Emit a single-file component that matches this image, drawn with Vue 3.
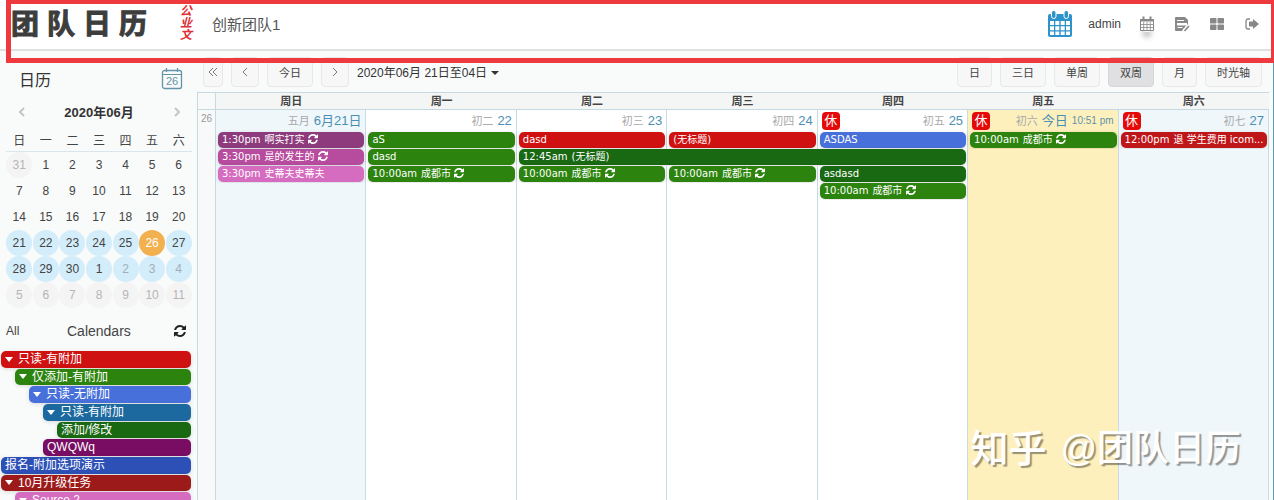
<script setup>
const weekdays = ['日', '一', '二', '三', '四', '五', '六']

const miniWeeks = [
  [31, 1, 2, 3, 4, 5, 6],
  [7, 8, 9, 10, 11, 12, 13],
  [14, 15, 16, 17, 18, 19, 20],
  [21, 22, 23, 24, 25, 26, 27],
  [28, 29, 30, 1, 2, 3, 4],
  [5, 6, 7, 8, 9, 10, 11],
]

function dayClass(row, col) {
  const other = (row === 0 && col === 0) || row === 5
  return {
    other,
    range: row === 3 || row === 4,
    faded: row === 4 && col > 3,
    today: row === 3 && col === 5,
  }
}

const sources = [
  { name: '只读-有附加', depth: 0, tone: 'red', open: true },
  { name: '仅添加-有附加', depth: 1, tone: 'green', open: true },
  { name: '只读-无附加', depth: 2, tone: 'blue', open: true },
  { name: '只读-有附加', depth: 3, tone: 'steel', open: true },
  { name: '添加/修改', depth: 4, tone: 'forest' },
  { name: 'QWQWq', depth: 3, tone: 'plum' },
  { name: '报名-附加选项演示', depth: 0, tone: 'royal' },
  { name: '10月升级任务', depth: 0, tone: 'brick', open: true },
  { name: 'Source 2', depth: 1, tone: 'pink', open: true },
]

const views = ['日', '三日', '单周', '双周', '月', '时光轴']

const days = [
  { lunar: '五月', label: '6月21日', kind: 'weekend' },
  { lunar: '初二', label: '22' },
  { lunar: '初三', label: '23' },
  { lunar: '初四', label: '24' },
  { lunar: '初五', label: '25', rest: true },
  { lunar: '初六', label: '今日', time: '10:51 pm', rest: true, kind: 'now' },
  { lunar: '初七', label: '27', rest: true, kind: 'weekend' },
]

const chengdu = { time: '10:00am', title: '成都市', tone: 'green', repeat: true }

const eventRows = [
  [
    { kind: 'weekend', event: { time: '1:30pm', title: '啊实打实', tone: 'purple', repeat: true } },
    { event: { title: 'aS', tone: 'green' } },
    { event: { title: 'dasd', tone: 'red' } },
    { event: { title: '(无标题)', tone: 'red' } },
    { event: { title: 'ASDAS', tone: 'blue' } },
    { kind: 'now', event: chengdu },
    { kind: 'weekend', event: { time: '12:00pm', title: '退 学生费用 icom...', tone: 'crimson' } },
  ],
  [
    { kind: 'weekend', event: { time: '3:30pm', title: '是的发生的', tone: 'orchid', repeat: true } },
    { event: { title: 'dasd', tone: 'green' } },
    { span: 3, event: { time: '12:45am', title: '(无标题)', tone: 'forest' } },
    { kind: 'now' },
    { kind: 'weekend' },
  ],
  [
    { kind: 'weekend', event: { time: '3:30pm', title: '史蒂夫史蒂夫', tone: 'pink' } },
    { event: chengdu },
    { event: chengdu },
    { event: chengdu },
    { event: { title: 'asdasd', tone: 'forest' } },
    { kind: 'now' },
    { kind: 'weekend' },
  ],
  [{ kind: 'weekend' }, {}, {}, {}, { event: chengdu }, { kind: 'now' }, { kind: 'weekend' }],
]

const refreshPath =
  'M1511 928q0 5-1 7-64 268-268 434.500T764 1536q-146 0-282.500-55T238 1324l-129 129q-19 19-45 19t-45-19-19-45V960q0-26 19-45t45-19h448q26 0 45 19t19 45-19 45l-137 137q71 66 161 102t187 36q134 0 250-65t186-179q11-17 53-117 8-23 30-23h192q13 0 22.500 9.500t9.500 22.500zm25-800v448q0 26-19 45t-45 19h-448q-26 0-45-19t-19-45 19-45l138-138Q969 256 768 256q-134 0-250 65T332 500q-11 17-53 117-8 23-30 23H50q-13 0-22.500-9.500T18 608v-7q65-268 270-434.500T768 0q146 0 284 55.500T1297 212l130-129q19-19 45-19t45 19 19 45z'
</script>

<template>
  <div class="app">
    <header class="topbar">
      <h1 class="brand"><span v-for="c in '团队日历'" :key="c">{{ c }}</span></h1>
      <div class="seal"><span v-for="c in '公业文'" :key="c">{{ c }}</span></div>
      <div class="team">创新团队1</div>
      <nav class="tools">
        <svg class="avatar" viewBox="0 0 26 28">
          <rect x="1" y="4" width="24" height="23" rx="2" fill="#2f93cb" />
          <path d="M3 11h4v4H3zm5.300 0h4v4h-4zm5.400 0h4v4h-4zm5.300 0h4v4h-4zM3 16.200h4v4H3zm5.300 0h4v4h-4zm5.400 0h4v4h-4zm5.300 0h4v4h-4zM3 21.400h4v3.600H3zm5.300 0h4v3.600h-4zm5.400 0h4v3.600h-4zm5.300 0h4v3.600h-4z" fill="#fff" />
          <rect x="4.500" y=".500" width="4.500" height="8" rx="2.200" fill="#2f93cb" stroke="#fff" />
          <rect x="17" y=".500" width="4.500" height="8" rx="2.200" fill="#2f93cb" stroke="#fff" />
        </svg>
        <span class="user">admin</span>
        <button class="tool active" aria-label="日历">
          <svg viewBox="0 0 16 16" fill="none" stroke="#888">
            <path d="M1.500 3.500h13v11h-13z" /><path d="M1 4.500h14" stroke-width="2" />
            <path d="M4.700 6v8.500M8 6v8.500M11.300 6v8.500M1.500 8.500h13M1.500 11.500h13" stroke-width=".8" />
            <path d="M4.500 .5v4M11.500 .5v4" stroke-width="2" />
          </svg>
        </button>
        <button class="tool" aria-label="编辑">
          <svg viewBox="0 0 16 16">
            <path d="M2 1h9l3 3v6l-4 5H2a1 1 0 0 1-1-1V2a1 1 0 0 1 1-1z" fill="#888" />
            <path d="M3 4.500h7M3.500 11.500h5" stroke="#fff" />
            <path d="M3 7h10v2.500H3z" fill="#fff" />
            <path d="M9.500 15.500l5.500-6" stroke="#fff" stroke-width="4" />
            <path d="M10.500 15l4.500-5" stroke="#888" stroke-width="1.600" />
          </svg>
        </button>
        <button class="tool" aria-label="视图">
          <svg viewBox="0 0 16 16" fill="#888">
            <rect x="1" y="2" width="6.500" height="5.500" rx=".8" /><rect x="8.500" y="2" width="6.500" height="5.500" rx=".8" />
            <rect x="1" y="8.500" width="6.500" height="5.500" rx=".8" /><rect x="8.500" y="8.500" width="6.500" height="5.500" rx=".8" />
          </svg>
        </button>
        <button class="tool" aria-label="退出">
          <svg viewBox="0 0 16 16">
            <path d="M6 3H4a2 2 0 0 0-2 2v6a2 2 0 0 0 2 2h2" fill="none" stroke="#888" stroke-width="1.300" />
            <path d="M5 5.500h4V3l6 5-6 5v-2.500H5z" fill="#888" />
          </svg>
        </button>
      </nav>
    </header>

    <div class="body">
      <aside class="sidebar">
        <div class="side-title">
          <h2>日历</h2>
          <svg viewBox="0 0 22 22" fill="none" stroke="#6394a8">
            <rect x="1.500" y="2.500" width="19" height="18" rx="2" stroke-width="1.300" />
            <path d="M1.500 6.500h19M5.500 0v4M16.500 0v4" stroke-width="1.200" />
            <text x="11" y="17" text-anchor="middle" stroke="none" fill="#6394a8" font-size="11">26</text>
          </svg>
        </div>
        <div class="month-nav">
          <button aria-label="上个月"><svg viewBox="0 0 10 12"><path d="M8 2L4 6l4 4" /></svg></button>
          <strong>2020年06月</strong>
          <button aria-label="下个月"><svg viewBox="0 0 10 12"><path d="M3 2l4 4-4 4" /></svg></button>
        </div>
        <table class="mini">
          <thead>
            <tr><th v-for="d in weekdays" :key="d">{{ d }}</th></tr>
          </thead>
          <tbody>
            <tr v-for="(week, r) in miniWeeks" :key="r">
              <td v-for="(d, c) in week" :key="c"><span :class="dayClass(r, c)">{{ d }}</span></td>
            </tr>
          </tbody>
        </table>
        <div class="cal-head">
          <span class="all">All</span>
          <h3>Calendars</h3>
          <button aria-label="刷新"><svg viewBox="0 0 1536 1536"><path :d="refreshPath" fill="#222" /></svg></button>
        </div>
        <ul class="sources">
          <li
            v-for="(s, i) in sources"
            :key="i"
            :class="s.tone"
            :style="{ marginLeft: s.depth * 14 + 'px' }"
          >
            <i v-if="s.open" class="caret"></i>{{ s.name }}
          </li>
        </ul>
      </aside>

      <main class="main">
        <div class="toolbar">
          <button class="btn slim" aria-label="前一段"><svg viewBox="0 0 10 10"><path d="M5 1L1 5l4 4M9 1L5 5l4 4" /></svg></button>
          <button class="btn arrow" aria-label="上一页"><svg viewBox="0 0 10 10"><path d="M7 1L3 5l4 4" /></svg></button>
          <button class="btn">今日</button>
          <button class="btn arrow" aria-label="下一页"><svg viewBox="0 0 10 10"><path d="M3 1l4 4-4 4" /></svg></button>
          <button class="range-title">2020年06月 21日至04日<i class="caret"></i></button>
          <div class="views">
            <button v-for="v in views" :key="v" class="btn" :class="{ on: v === '双周' }">{{ v }}</button>
          </div>
        </div>
        <div class="board">
          <table class="grid">
            <thead>
              <tr>
                <th class="wk"></th>
                <th v-for="d in weekdays" :key="d">周{{ d }}</th>
              </tr>
            </thead>
            <tbody>
              <tr class="day-row">
                <td class="wk">26</td>
                <td v-for="(d, i) in days" :key="i" :class="d.kind">
                  <div class="day-head">
                    <span v-if="d.rest" class="rest">休</span>
                    <span class="lunar">{{ d.lunar }}</span>
                    <span class="num">{{ d.label }}</span>
                    <span v-if="d.time" class="clock">{{ d.time }}</span>
                  </div>
                </td>
              </tr>
              <tr v-for="(row, r) in eventRows" :key="r" class="event-row">
                <td class="wk"></td>
                <td v-for="(cell, i) in row" :key="i" :class="cell.kind" :colspan="cell.span || 1">
                  <div v-if="cell.event" class="event" :class="cell.event.tone">
                    <span v-if="cell.event.time" class="time">{{ cell.event.time }}</span>{{ cell.event.title }}
                    <svg v-if="cell.event.repeat" viewBox="0 0 1536 1536"><path :d="refreshPath" fill="#fff" /></svg>
                  </div>
                </td>
              </tr>
              <tr>
                <td class="wk"></td>
                <td v-for="(d, i) in days" :key="i" :class="d.kind"></td>
              </tr>
            </tbody>
          </table>
        </div>
      </main>
    </div>

    <div class="highlight"></div>
    <div class="watermark"><span class="site">知乎</span><span>@团队日历</span></div>
  </div>
</template>

<style>
body {
  margin: 0;
  background: #f9fafa;
}
</style>

<style scoped>
* {
  box-sizing: border-box;
}
.app {
  position: relative;
  display: flex;
  flex-direction: column;
  height: 100vh;
  overflow: hidden;
  font-family: "Liberation Sans", "Noto Sans CJK SC", sans-serif;
  font-size: 12px;
  color: #444;
}
button {
  padding: 0;
  border: 0;
  background: none;
  font: inherit;
  color: inherit;
}
h1,
h2,
h3 {
  margin: 0;
  font-weight: 400;
}
svg {
  display: block;
}
.topbar {
  display: flex;
  align-items: center;
  flex: none;
  height: 51px;
  padding: 0 14px 1px 11px;
  border-bottom: 2px solid #e0e0e0;
  background: #fff;
}
.brand {
  display: flex;
  gap: 8px;
  padding-top: 2px;
  font-size: 28px;
  line-height: 40px;
  font-weight: 700;
  color: #3d3d3d;
  -webkit-text-stroke: 1px #3d3d3d;
}
.seal {
  display: flex;
  flex-direction: column;
  margin-left: 33px;
  padding-bottom: 2px;
  font-size: 12px;
  line-height: 12px;
  font-weight: 700;
  font-style: italic;
  color: #e03038;
}
.team {
  margin-left: 20px;
  padding-bottom: 2px;
  font-size: 15px;
  color: #555;
}
.tools {
  display: flex;
  align-items: center;
  margin-left: auto;
}
.avatar {
  width: 26px;
  height: 28px;
}
.user {
  margin: 0 18px 0 15px;
}
.tool {
  width: 16px;
  margin-left: 19px;
}
.tool.active {
  margin-left: 0;
  border-radius: 8px;
  box-shadow: 0 9px 5px -3px #ccc;
  background: #fff;
}
.tool svg {
  width: 16px;
  height: 16px;
}
.body {
  display: flex;
  flex: 1;
  min-height: 0;
}
.sidebar {
  flex: none;
  width: 197px;
  padding-top: 6px;
}
.side-title {
  display: flex;
  align-items: center;
  justify-content: space-between;
  height: 43px;
  padding: 0 14px 0 19px;
}
.side-title h2 {
  font-size: 16px;
  color: #333;
}
.side-title svg {
  width: 22px;
  height: 22px;
}
.month-nav {
  display: flex;
  align-items: center;
  justify-content: space-between;
  height: 23px;
  padding: 0 15px 0 16px;
  font-size: 13px;
  color: #333;
}
.month-nav svg {
  width: 10px;
  height: 12px;
  fill: none;
  stroke: #c4c4c4;
  stroke-width: 2;
}
.mini {
  width: 186px;
  margin-left: 6px;
  table-layout: fixed;
  border-collapse: separate;
  border-spacing: 0;
  text-align: center;
}
.mini th {
  height: 29px;
  padding: 4px 0 0;
  border-bottom: 1px solid #d9e6ee;
  font-weight: 400;
}
.mini td {
  height: 26px;
  padding: 0;
}
.mini td span {
  display: block;
  width: 26px;
  margin: 0 auto;
  border-radius: 13px;
  line-height: 26px;
}
.mini .other {
  background: #f4f4f4;
  color: #b5b5b5;
}
.mini .range {
  background: #d3edfb;
}
.mini .faded {
  color: #9fb0b8;
}
.mini .today {
  background: #f2b04e;
  color: #fff;
}
.cal-head {
  display: flex;
  align-items: center;
  justify-content: space-between;
  height: 43px;
  padding: 2px 11px 0 6px;
}
.cal-head h3 {
  font-size: 14px;
  margin-left: 36px;
  margin-right: auto;
}
.cal-head .all {
  width: 25px;
}
.cal-head svg {
  width: 12px;
  height: 12px;
}
.sources {
  display: grid;
  grid-auto-rows: 1fr;
  gap: 1px;
  height: 158px;
  margin: 0 6px 0 1px;
  padding: 0;
  list-style: none;
  line-height: 17px;
}
.sources li {
  display: flex;
  align-items: center;
  min-height: 0;
  padding-left: 4px;
  border-radius: 5px;
  color: #fff;
  box-shadow: 0 1px 4px #0002;
}
.caret {
  display: inline-block;
  border: 4px solid transparent;
  border-top-color: currentColor;
  border-bottom: 0;
}
.sources .caret {
  margin-right: 5px;
  border-top-width: 5px;
}
.red { background: #cf1111; }
.green { background: #2c840e; }
.blue { background: #4870da; }
.steel { background: #1b699f; }
.forest { background: #196812; }
.plum { background: #780d63; }
.royal { background: #2c50b6; }
.brick { background: #9d1a1a; }
.pink { background: #d66cc0; }
.purple { background: #8e3b7e; }
.orchid { background: #b74b9d; }
.crimson { background: #bf161a; }
.main {
  display: flex;
  flex: 1;
  flex-direction: column;
  min-width: 0;
  border-right: 1px solid #5b9fb5;
}
.toolbar {
  display: flex;
  align-items: center;
  flex: none;
  height: 41px;
  padding: 0 11px 0 6px;
  gap: 8px;
}
.btn {
  height: 30px;
  padding: 0 11px;
  border: 1px solid #e8e8e8;
  border-radius: 4px;
  background: #f7f7f7;
  font-size: 11px;
}
.btn.slim {
  padding: 0 4px;
}
.btn.arrow {
  padding: 0 8px;
}
.btn svg {
  width: 10px;
  height: 10px;
  fill: none;
  stroke: #777;
}
.btn.on {
  border-color: #d6d6d8;
  background: #e0e0e2;
}
.range-title {
  color: #333;
}
.range-title .caret {
  margin-left: 4px;
  vertical-align: 2px;
}
.views {
  display: flex;
  gap: 8px;
  margin-left: auto;
}
.board {
  flex: 1;
  min-height: 0;
  padding-right: 4px;
}
.grid {
  width: 100%;
  height: 100%;
  table-layout: fixed;
  border-collapse: separate;
  border-spacing: 0;
  border-left: 1px solid #c6d9e3;
}
.grid th {
  height: 18px;
  padding: 0;
  border: 1px solid #c6d9e3;
  border-width: 1px 0;
  background: #f4f5f5;
  font-size: 11px;
  line-height: 16px;
}
.grid td {
  padding: 0 1px 0 2px;
  border-right: 1px solid #c8dce6;
  background: #fff;
}
.grid .wk {
  width: 18px;
  padding: 0;
  border-right: 1px solid #c6d9e3;
  background: #f8f9f9;
  font-size: 10px;
  line-height: 18px;
  text-align: center;
  vertical-align: top;
  color: #999;
}
.grid .weekend {
  background: #eff7fb;
}
.grid .now {
  background: #fdf0bd;
}
.day-row td {
  height: 22px;
}
.day-head {
  display: flex;
  align-items: center;
  justify-content: flex-end;
  gap: 4px;
  height: 22px;
  padding: 0 3px 0 2px;
  line-height: 18px;
}
.rest {
  width: 18px;
  height: 18px;
  margin-right: auto;
  border-radius: 4px;
  background: #e50a0a;
  font-size: 13px;
  text-align: center;
  color: #fff;
}
.lunar {
  font-size: 11px;
  color: #aaa;
}
.num {
  font-size: 13px;
  color: #4b90b4;
}
.clock {
  font-size: 10px;
  color: #5f93a8;
}
.event-row td {
  height: 17px;
  vertical-align: top;
}
.event {
  height: 16px;
  padding: 0 0 0 4px;
  overflow: hidden;
  border-radius: 5px;
  box-shadow: 0 1px 4px #0002;
  font-family: "DejaVu Sans", "Noto Sans CJK SC", sans-serif;
  font-size: 10px;
  line-height: 16px;
  white-space: nowrap;
  color: #fff;
}
.event .time {
  margin-right: 4px;
}
.event svg {
  display: inline-block;
  width: 10px;
  height: 10px;
  vertical-align: -1px;
}
.highlight {
  position: absolute;
  top: 0;
  left: 6px;
  right: 0;
  height: 63px;
  border: 5px solid #ee3a3e;
  border-width: 4px 3px 5px 5px;
  pointer-events: none;
}
.watermark {
  position: absolute;
  right: 33px;
  bottom: 25px;
  display: flex;
  gap: 14px;
  font-size: 36px;
  line-height: 52px;
  font-weight: 500;
  color: #fff;
  text-shadow: 2px 2px 1px #0006;
  pointer-events: none;
}
.watermark .site {
  font-size: 38px;
}
</style>
